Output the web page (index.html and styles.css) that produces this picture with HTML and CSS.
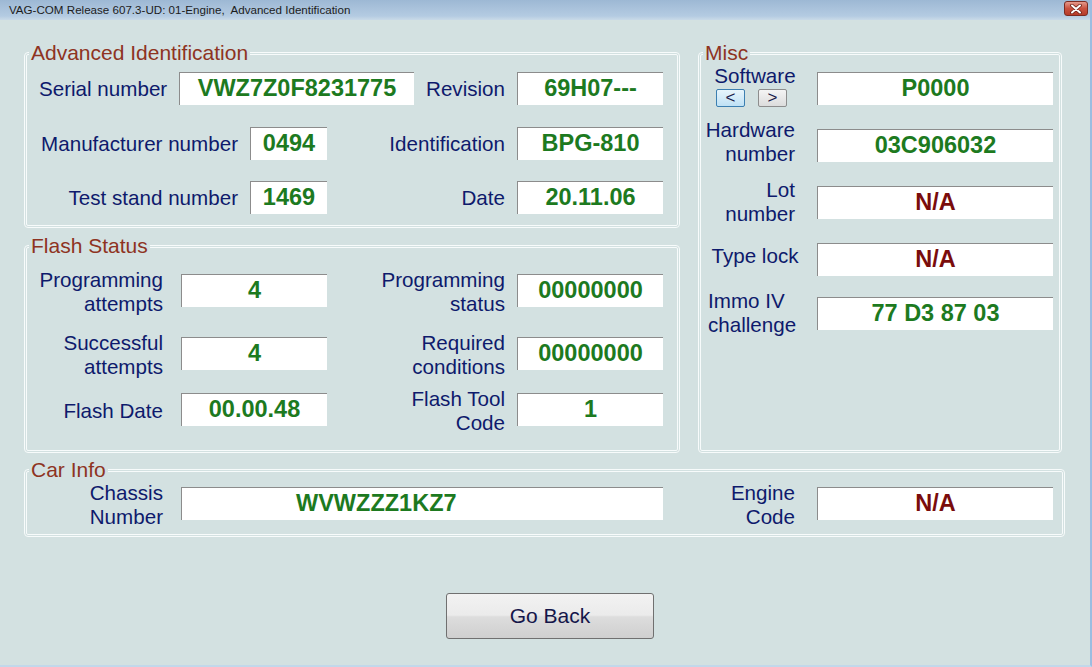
FILE: index.html
```html
<!DOCTYPE html>
<html lang="en">
<head>
<meta charset="UTF-8">
<meta name="viewport" content="width=device-width, initial-scale=1.0">
<title>VAG-COM Advanced Identification</title>
<link rel="stylesheet" href="styles.css">
</head>
<body>
<div class="window">
  <div class="titlebar">
    <span class="title">VAG-COM Release 607.3-UD: 01-Engine,  Advanced Identification</span>
    <span class="close">
      <svg width="12" height="10" viewBox="0 0 12 10">
        <path d="M2 1.5 L10 8.5 M10 1.5 L2 8.5" stroke="#6b2018" stroke-width="3.6" stroke-linecap="round"/>
        <path d="M2 1.5 L10 8.5 M10 1.5 L2 8.5" stroke="#fff" stroke-width="2" stroke-linecap="round"/>
      </svg>
    </span>
  </div>

  <div class="client">
    <div class="panels">
      <fieldset class="group ident">
        <legend>Advanced Identification</legend>
        <div class="row r1">
          <div class="label lead">Serial number</div>
          <div class="value wide">VWZ7Z0F8231775</div>
          <div class="label short">Revision</div>
          <div class="value">69H07---</div>
        </div>
        <div class="row r2">
          <div class="label long">Manufacturer number</div>
          <div class="value narrow">0494</div>
          <div class="label mid">Identification</div>
          <div class="value">BPG-810</div>
        </div>
        <div class="row r3">
          <div class="label long">Test stand number</div>
          <div class="value narrow">1469</div>
          <div class="label mid">Date</div>
          <div class="value">20.11.06</div>
        </div>
      </fieldset>

      <fieldset class="group misc">
        <legend>Misc</legend>
        <div class="row sw">
          <div class="label side">
            <div class="center">Software</div>
            <div class="arrows">
              <span class="arrow focused">&lt;</span>
              <span class="arrow">&gt;</span>
            </div>
          </div>
          <div class="value long-val">P0000</div>
        </div>
        <div class="row hw">
          <div class="label side right">Hardware<br>number</div>
          <div class="value long-val low">03C906032</div>
        </div>
        <div class="row lot">
          <div class="label side right">Lot<br>number</div>
          <div class="value long-val na">N/A</div>
        </div>
        <div class="row lock">
          <div class="label side center">Type lock</div>
          <div class="value long-val low na">N/A</div>
        </div>
        <div class="row immo">
          <div class="label side left">Immo IV<br>challenge</div>
          <div class="value long-val">77 D3 87 03</div>
        </div>
      </fieldset>

      <fieldset class="group flash">
        <legend>Flash Status</legend>
        <div class="row f1">
          <div class="label first">Programming<br>attempts</div>
          <div class="value">4</div>
          <div class="label mid">Programming<br>status</div>
          <div class="value">00000000</div>
        </div>
        <div class="row f2">
          <div class="label first">Successful<br>attempts</div>
          <div class="value">4</div>
          <div class="label mid">Required<br>conditions</div>
          <div class="value">00000000</div>
        </div>
        <div class="row f3">
          <div class="label first">Flash Date</div>
          <div class="value">00.00.48</div>
          <div class="label mid">Flash Tool<br>Code</div>
          <div class="value">1</div>
        </div>
      </fieldset>
    </div>

    <fieldset class="group car">
      <legend>Car Info</legend>
      <div class="row">
        <div class="label first">Chassis<br>Number</div>
        <div class="value chassis">WVWZZZ1KZ7</div>
        <div class="label engine">Engine<br>Code</div>
        <div class="value long-val na">N/A</div>
      </div>
    </fieldset>

    <div class="footer">
      <button class="go-back">Go Back</button>
    </div>
  </div>
</div>
</body>
</html>
```

FILE: styles.css
```css
* {
  box-sizing: border-box;
}

body {
  margin: 0;
  font-family: "Liberation Sans", Arial, sans-serif;
  background-color: #d3e1e1;
}

.window {
  width: 1092px;
  height: 667px;
  background-color: #d3e1e1;
  border-right: 2px solid #9cbde0;
  border-bottom: 2px solid #c2d8ea;
  overflow: hidden;
}

.titlebar {
  height: 20px;
  display: flex;
  align-items: flex-start;
  justify-content: space-between;
  background: linear-gradient(#9db8d4, #b4cbe2 80%, #c9dae8);
  padding: 0 2px 0 9px;
}

.title {
  font-size: 11.6px;
  line-height: 19px;
  color: #1c1c1c;
  white-space: pre;
}

.close {
  width: 24px;
  height: 15px;
  margin-top: 1px;
  border: 1px solid #7c2b22;
  border-radius: 3px;
  background: linear-gradient(#e59a8c, #c9513f 50%, #b63b2a);
  display: flex;
  align-items: center;
  justify-content: center;
}

.client {
  padding: 22px 0 0 24px;
}

.panels {
  display: grid;
  grid-template-columns: 656px 364px;
  grid-template-rows: 186px 218px;
  column-gap: 18px;
  row-gap: 7px;
}

.group {
  margin: 0;
  padding: 0;
  min-width: 0;
  border: 3px double #f7fbfb;
  border-radius: 4px;
}

.group legend {
  margin-left: 2px;
  padding: 0 2px;
  font-size: 21px;
  line-height: 22px;
  color: #8e3322;
}

.misc {
  grid-column: 2;
  grid-row: 1 / span 2;
}

.row {
  display: flex;
  align-items: center;
}

.label {
  font-size: 20.6px;
  line-height: 24px;
  color: #0e1a6c;
  text-align: right;
  flex-shrink: 0;
}

.value {
  width: 146px;
  height: 33px;
  flex-shrink: 0;
  background-color: #fff;
  border-top: 1px solid #8c8c8c;
  border-left: 1px solid #8c8c8c;
  font-size: 23.5px;
  font-weight: bold;
  line-height: 31px;
  text-align: center;
  color: #1d7a1f;
}

.value.na {
  color: #7a0c0c;
}

/* Advanced Identification */
.ident .r1 {
  margin-top: 8px;
}

.ident .r2 {
  margin-top: 22px;
}

.ident .r3 {
  margin-top: 21px;
}

.lead {
  width: 152px;
  padding-left: 12px;
  text-align: left;
}

.wide {
  width: 235px;
}

.short {
  width: 103px;
  padding-right: 12px;
}

.long {
  width: 223px;
  padding-right: 12px;
}

.narrow {
  width: 77px;
}

.mid {
  width: 190px;
  padding-right: 12px;
}

/* Flash Status */
.flash .label {
  padding-top: 4px;
}

.flash .f1 {
  margin-top: 7px;
}

.flash .f2 {
  margin-top: 11px;
}

.flash .f3 {
  margin-top: 4px;
}

.first {
  width: 154px;
  padding-right: 18px;
}

/* Misc */
.side {
  width: 116px;
}

.side.right {
  padding-right: 22px;
}

.side.center,
.side .center {
  padding-right: 8px;
  text-align: center;
}

.side.left {
  padding-left: 7px;
  text-align: left;
}

.long-val {
  width: 236px;
}

.value.low {
  margin-top: 7px;
}

.misc .sw {
  align-items: flex-start;
  margin-top: 1px;
}

.misc .sw .center {
  line-height: 22px;
}

.misc .sw .value {
  margin-top: 7px;
}

.arrows {
  display: flex;
  gap: 13px;
  margin: 2px 0 0 15px;
}

.arrow {
  width: 29px;
  height: 18px;
  border: 1px solid #8d8d8d;
  border-radius: 2px;
  background: linear-gradient(#f4f4f4, #dcdcdc);
  font-size: 17px;
  line-height: 15px;
  text-align: center;
  color: #1b1b4a;
}

.arrow.focused {
  border-color: #3c7fb1;
  background: linear-gradient(#e8f5fc, #bfe1f5);
}

.misc .hw {
  margin-top: 11px;
}

.misc .lot {
  margin-top: 12px;
}

.misc .lock {
  margin-top: 10px;
}

.misc .immo {
  margin-top: 13px;
}

/* Car Info */
.car {
  width: 1041px;
  height: 78px;
  margin-top: 6px;
}

.car .value {
  margin-bottom: 4px;
}

.chassis {
  width: 482px;
  padding-left: 114px;
  text-align: left;
}

.engine {
  width: 154px;
  padding-right: 22px;
}

.footer {
  padding: 56px 0 0 422px;
}

.go-back {
  width: 208px;
  height: 46px;
  border: 1px solid #707070;
  border-radius: 3px;
  background: linear-gradient(#f2f2f2, #ebebeb 48%, #dddddd 52%, #cfcfcf);
  font-family: "Liberation Sans", Arial, sans-serif;
  font-size: 21px;
  color: #15164a;
}
```
